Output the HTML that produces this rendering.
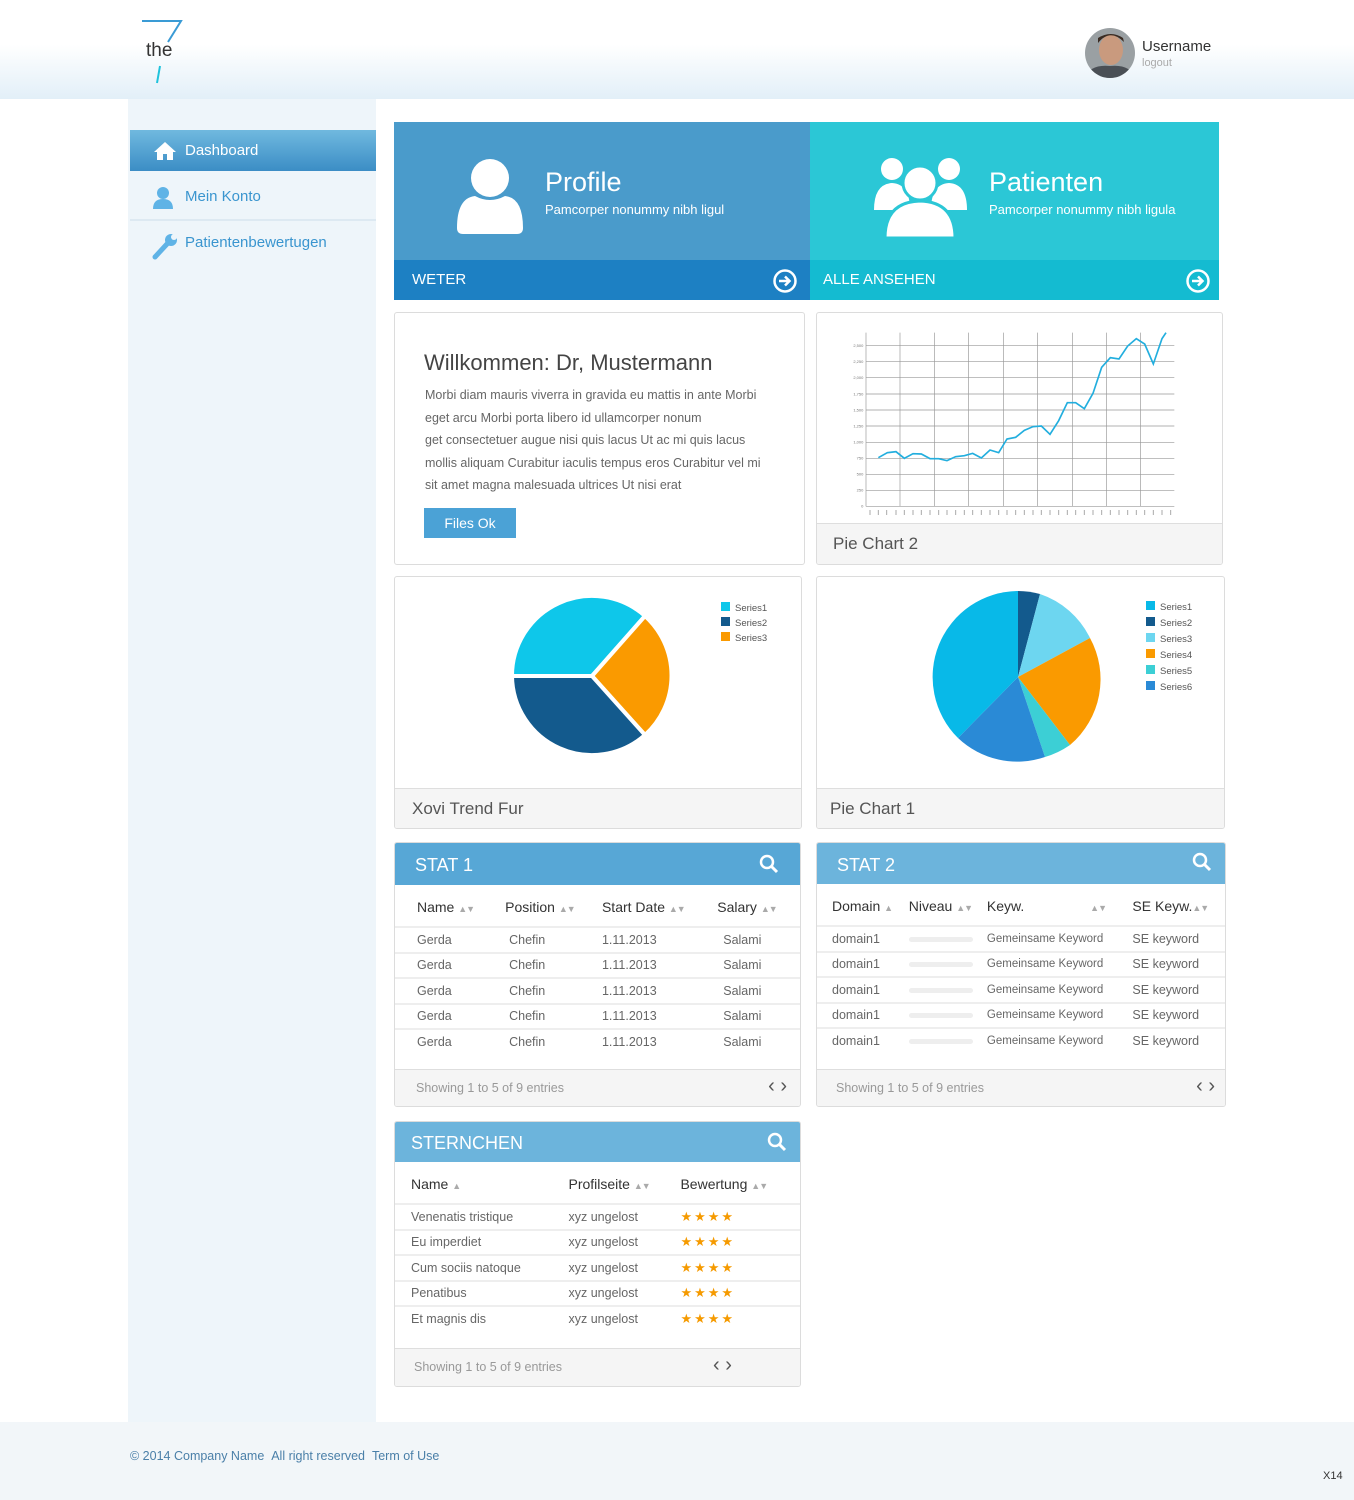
<!DOCTYPE html>
<html><head><meta charset="utf-8"><style>
*{margin:0;padding:0;box-sizing:border-box}
body{width:1354px;height:1500px;position:relative;background:#fff;font-family:"Liberation Sans",sans-serif;color:#555;overflow:hidden}
.a{position:absolute}
.hdr{left:0;top:0;width:1354px;height:99px;background:linear-gradient(#fff 0%,#fff 45%,#e2eff8 100%)}
.side{left:128px;top:99px;width:248px;height:1323px;background:#eef5fa}
.nav{left:130px;width:246px;height:42px;font-size:15px;color:#3a95cf;padding:12px 0 0 55px}
.card{border:1px solid #dcdcdc;border-radius:3px;background:#fff}
.foot{background:#f5f5f5;border-top:1px solid #dedede}
table{border-collapse:collapse;width:100%;font-size:12.5px;color:#666}
td{height:25.5px;border-bottom:2px solid #eee}
th{font-weight:normal;color:#333;font-size:14px;text-align:left;height:40px;border-bottom:2px solid #eee}
.srt{color:#aaa;font-size:9px;letter-spacing:-1px}
.sh{color:#fff;font-size:18px;padding:12px 0 0 20px}
.st{color:#f59a00;font-size:13px;letter-spacing:2px}
.bar{display:inline-block;width:64px;height:5px;background:#eee;border-radius:3px;vertical-align:middle}
</style></head><body>
<div class="a hdr"></div>
<svg class="a" style="left:138px;top:18px" width="50" height="68" viewBox="0 0 50 68"><path d="M4 3H43L30 24" stroke="#3a9bd5" stroke-width="2" fill="none"/><path d="M22 48L19 65" stroke="#1fc3dc" stroke-width="2"/></svg>
<div class="a" style="left:146px;top:40px;font-size:19px;color:#333">the</div>
<svg class="a" style="left:1085px;top:28px" width="50" height="50"><defs><clipPath id="c"><circle cx="25" cy="25" r="25"/></clipPath></defs><g clip-path="url(#c)"><rect width="50" height="50" fill="#9aa0a3"/><ellipse cx="26" cy="22" rx="12" ry="15" fill="#c99a7e"/><path d="M13 15Q25 0 39 14L38 10Q26 2 13 10Z" fill="#3a2b22"/><path d="M0 50Q5 36 25 38Q45 36 50 50Z" fill="#4a4f55"/></g></svg>
<div class="a" style="left:1142px;top:38px;font-size:15px;color:#333">Username</div>
<div class="a" style="left:1142px;top:57px;font-size:11px;color:#aaa">logout</div>
<div class="a side"></div>
<div class="a nav" style="top:130px;height:41px;background:linear-gradient(#70b9df,#3b8dc5);color:#fff">Dashboard</div>
<svg class="a" style="left:153px;top:141px" width="24" height="20"><path d="M12 1L1 11H4V19H10V13H14V19H20V11H23Z" fill="#fff"/></svg>
<div class="a nav" style="top:176px">Mein Konto</div>
<div class="a" style="left:130px;top:219px;width:246px;height:2px;background:#dde9f2"></div>
<svg class="a" style="left:152px;top:186px" width="24" height="24"><circle cx="11" cy="7" r="6" fill="#5fb3e6"/><path d="M1 23Q1 13 11 13Q21 13 21 23Z" fill="#5fb3e6"/></svg>
<div class="a nav" style="top:222px">Patientenbewertugen</div>
<svg class="a" style="left:152px;top:232px" width="26" height="28"><path d="M3 25L15 12" stroke="#5fb3e6" stroke-width="5" stroke-linecap="round"/><circle cx="19" cy="8" r="6" fill="#5fb3e6"/><circle cx="22" cy="5" r="3" fill="#eef5fa"/></svg>

<div class="a" style="left:394px;top:122px;width:416px;height:178px;background:#4a9bcb"></div>
<div class="a" style="left:394px;top:260px;width:416px;height:40px;background:#1d80c3;color:#fff;font-size:15px;padding:11px 18px">WETER</div>
<div class="a" style="left:810px;top:122px;width:409px;height:178px;background:#2bc7d6"></div>
<div class="a" style="left:810px;top:260px;width:409px;height:40px;background:#14bbd1;color:#fff;font-size:15px;padding:11px 13px">ALLE ANSEHEN</div>
<svg class="a" style="left:772px;top:268px" width="26" height="26"><circle cx="13" cy="13" r="10.5" stroke="#fff" stroke-width="2.5" fill="none"/><path d="M7 13H17M13 8.5L17.5 13L13 17.5" stroke="#fff" stroke-width="2.5" fill="none"/></svg>
<svg class="a" style="left:1185px;top:268px" width="26" height="26"><circle cx="13" cy="13" r="10.5" stroke="#fff" stroke-width="2.5" fill="none"/><path d="M7 13H17M13 8.5L17.5 13L13 17.5" stroke="#fff" stroke-width="2.5" fill="none"/></svg>
<svg class="a" style="left:455px;top:158px" width="70" height="76"><circle cx="35" cy="20" r="19" fill="#fff"/><path d="M2 70Q2 40 20 38Q35 46 50 38Q68 40 68 70Q68 76 62 76H8Q2 76 2 70Z" fill="#fff"/></svg>
<div class="a" style="left:545px;top:167px;font-size:27px;color:#fff">Profile</div>
<div class="a" style="left:545px;top:202px;font-size:13px;color:#fff">Pamcorper nonummy nibh ligul</div>
<svg class="a" style="left:873px;top:152px" width="95" height="88"><circle cx="19" cy="17" r="11" fill="#fff"/><circle cx="76" cy="17" r="11" fill="#fff"/><path d="M1 58Q1 32 19 31Q37 32 37 58Z" fill="#fff"/><path d="M58 58Q58 32 76 31Q94 32 94 58Z" fill="#fff"/><circle cx="47" cy="31" r="17" stroke="#2bc7d6" stroke-width="3" fill="#fff"/><path d="M12 86Q12 50 47 49Q82 50 82 86Z" stroke="#2bc7d6" stroke-width="3" fill="#fff"/></svg>
<div class="a" style="left:989px;top:167px;font-size:27px;color:#fff">Patienten</div>
<div class="a" style="left:989px;top:202px;font-size:13px;color:#fff">Pamcorper nonummy nibh ligula</div>

<div class="a card" style="left:394px;top:312px;width:411px;height:253px"></div>
<div class="a" style="left:424px;top:350px;font-size:22px;color:#444">Willkommen: Dr, Mustermann</div>
<div class="a" style="left:425px;top:384px;width:348px;font-size:12.5px;line-height:22.5px;color:#666">Morbi diam mauris viverra in gravida eu mattis in ante Morbi eget arcu Morbi porta libero id ullamcorper nonum<br>get consectetuer augue nisi quis lacus Ut ac mi quis lacus mollis aliquam Curabitur iaculis tempus eros Curabitur vel mi sit amet magna malesuada ultrices Ut nisi erat</div>
<div class="a" style="left:424px;top:508px;width:92px;height:30px;background:#4ba2d6;color:#fff;font-size:14px;text-align:center;line-height:30px">Files Ok</div>

<div class="a card" style="left:816px;top:312px;width:407px;height:253px;overflow:hidden"><div class="a foot" style="left:0;top:210px;width:407px;height:43px;font-size:17px;color:#555;padding:10px 16px">Pie Chart 2</div></div>
<svg class="a" style="left:810px;top:310px" width="420" height="212" viewBox="0 0 1260 636">
<g stroke="#999" stroke-width="2"><path d="M168 107H1093M168 155H1093M168 203H1093M168 252H1093M168 300H1093M168 348H1093M168 397H1093M168 445H1093M168 493H1093M168 541H1093M168 589H1093"/><path d="M168 68V589M270 68V589M373 68V589M476 68V589M580 68V589M683 68V589M787 68V589M889 68V589M992 68V589"/></g>
<g font-size="12" fill="#777" text-anchor="end" font-family="Liberation Sans"><text x="160" y="111">2,500</text><text x="160" y="159">2,250</text><text x="160" y="207">2,000</text><text x="160" y="256">1,750</text><text x="160" y="304">1,500</text><text x="160" y="352">1,250</text><text x="160" y="401">1,000</text><text x="160" y="449">750</text><text x="160" y="497">500</text><text x="160" y="545">250</text><text x="160" y="593">0</text></g>
<polyline fill="none" stroke="#22aede" stroke-width="5" points="205,443 232,428 258,425 283,445 309,431 334,432 360,446 386,446 411,452 437,440 463,437 488,430 514,444 540,420 566,428 591,387 617,382 643,361 669,350 694,348 720,373 746,332 772,278 797,278 823,296 849,250 875,172 901,143 927,147 953,108 979,86 1004,102 1030,162 1056,86 1068,68"/>
<path d="M180 600V615M205 600V615M230 600V615M258 600V615M283 600V615M309 600V615M334 600V615M360 600V615M386 600V615M411 600V615M437 600V615M463 600V615M488 600V615M514 600V615M540 600V615M566 600V615M591 600V615M617 600V615M643 600V615M669 600V615M694 600V615M720 600V615M746 600V615M772 600V615M797 600V615M823 600V615M849 600V615M875 600V615M901 600V615M927 600V615M953 600V615M979 600V615M1004 600V615M1030 600V615M1056 600V615M1082 600V615" stroke="#aaa" stroke-width="3"/>
</svg>

<div class="a card" style="left:394px;top:576px;width:408px;height:253px;overflow:hidden"><div class="a foot" style="left:0;top:211px;width:408px;height:42px;font-size:17px;padding:10px 17px">Xovi Trend Fur</div></div>
<svg class="a" style="left:500px;top:585px" width="190" height="185"><g stroke="#fff" stroke-width="4"><path d="M92 91L12 91A80 80 0 0 1 145 31Z" fill="#0ec7ea"/><path d="M92 91L145 31A80 80 0 0 1 145 150Z" fill="#fa9a00"/><path d="M92 91L145 150A80 80 0 0 1 12 91Z" fill="#135a8d"/></g></svg>
<div class="a" style="left:721px;top:601px;font-size:9.5px;line-height:15px;color:#555"><div><span style="display:inline-block;width:9px;height:9px;background:#0ec7ea;margin-right:5px"></span>Series1</div><div><span style="display:inline-block;width:9px;height:9px;background:#135a8d;margin-right:5px"></span>Series2</div><div><span style="display:inline-block;width:9px;height:9px;background:#fa9a00;margin-right:5px"></span>Series3</div></div>

<div class="a card" style="left:816px;top:576px;width:409px;height:253px;overflow:hidden"><div class="a foot" style="left:0;top:211px;width:409px;height:42px;font-size:17px;padding:10px 13px">Pie Chart 1</div></div>
<svg class="a" style="left:930px;top:589px" width="178" height="178"><g transform="translate(88,88)"><path d="M0 0L0 -86A86 86 0 0 1 22 -83Z" fill="#135a8d"/><path d="M0 0L22 -83A86 86 0 0 1 72 -39Z" fill="#6dd6f0"/><path d="M0 0L72 -39A86 86 0 0 1 52 68Z" fill="#fa9a00"/><path d="M0 0L52 68A86 86 0 0 1 27 80Z" fill="#3ccfd5"/><path d="M0 0L27 80A86 86 0 0 1 -60 61Z" fill="#2a8ad6"/><path d="M0 0L-60 61A86 86 0 0 1 0 -86Z" fill="#08b9e8"/></g></svg>
<div class="a" style="left:1146px;top:600px;font-size:9.5px;line-height:16px;color:#555"><div><span style="display:inline-block;width:9px;height:9px;background:#08b9e8;margin-right:5px"></span>Series1</div><div><span style="display:inline-block;width:9px;height:9px;background:#135a8d;margin-right:5px"></span>Series2</div><div><span style="display:inline-block;width:9px;height:9px;background:#6dd6f0;margin-right:5px"></span>Series3</div><div><span style="display:inline-block;width:9px;height:9px;background:#fa9a00;margin-right:5px"></span>Series4</div><div><span style="display:inline-block;width:9px;height:9px;background:#3ccfd5;margin-right:5px"></span>Series5</div><div><span style="display:inline-block;width:9px;height:9px;background:#2a8ad6;margin-right:5px"></span>Series6</div></div>

<div class="a card" style="left:394px;top:842px;width:407px;height:265px;overflow:hidden">
<div style="height:42px;background:#57a7d6" class="sh">STAT 1</div>
<table style="margin-top:2px"><tr><th style="padding-left:22px">Name <span class="srt">▲▼</span></th><th>Position <span class="srt">▲▼</span></th><th>Start Date <span class="srt">▲▼</span></th><th>Salary <span class="srt">▲▼</span></th></tr>
<tr><td style="padding-left:22px">Gerda</td><td style="padding-left:4px">Chefin</td><td>1.11.2013</td><td style="padding-left:6px">Salami</td></tr>
<tr><td style="padding-left:22px">Gerda</td><td style="padding-left:4px">Chefin</td><td>1.11.2013</td><td style="padding-left:6px">Salami</td></tr>
<tr><td style="padding-left:22px">Gerda</td><td style="padding-left:4px">Chefin</td><td>1.11.2013</td><td style="padding-left:6px">Salami</td></tr>
<tr><td style="padding-left:22px">Gerda</td><td style="padding-left:4px">Chefin</td><td>1.11.2013</td><td style="padding-left:6px">Salami</td></tr>
<tr><td style="padding-left:22px;border:0">Gerda</td><td style="padding-left:4px;border:0">Chefin</td><td style="border:0">1.11.2013</td><td style="padding-left:6px;border:0">Salami</td></tr></table>
<div class="a foot" style="left:0;top:226px;width:407px;height:39px;font-size:12.5px;color:#999;padding:11px 21px">Showing 1 to 5 of 9 entries<span style="position:absolute;right:15px;top:5px;font-size:20px;color:#555">‹ ›</span></div>
</div>
<svg class="a" style="left:759px;top:854px" width="20" height="20"><circle cx="8" cy="8" r="6" stroke="#fff" stroke-width="2.5" fill="none"/><path d="M12 12L18 18" stroke="#fff" stroke-width="3"/></svg>

<div class="a card" style="left:816px;top:842px;width:410px;height:265px;overflow:hidden">
<div style="height:41px;background:#6cb4dc" class="sh" >STAT 2</div>
<table style="margin-top:2px"><tr><th style="padding-left:15px">Domain <span class="srt">▲</span></th><th>Niveau <span class="srt">▲▼</span></th><th>Keyw. <span class="srt" style="padding-left:62px">▲▼</span></th><th>SE Keyw.<span class="srt">▲▼</span></th></tr>
<tr><td style="padding-left:15px">domain1</td><td><span class="bar"></span></td><td style="font-size:11.5px">Gemeinsame Keyword</td><td>SE keyword</td></tr>
<tr><td style="padding-left:15px">domain1</td><td><span class="bar"></span></td><td style="font-size:11.5px">Gemeinsame Keyword</td><td>SE keyword</td></tr>
<tr><td style="padding-left:15px">domain1</td><td><span class="bar"></span></td><td style="font-size:11.5px">Gemeinsame Keyword</td><td>SE keyword</td></tr>
<tr><td style="padding-left:15px">domain1</td><td><span class="bar"></span></td><td style="font-size:11.5px">Gemeinsame Keyword</td><td>SE keyword</td></tr>
<tr><td style="padding-left:15px;border:0">domain1</td><td style="border:0"><span class="bar"></span></td><td style="font-size:11.5px;border:0">Gemeinsame Keyword</td><td style="border:0">SE keyword</td></tr></table>
<div class="a foot" style="left:0;top:226px;width:410px;height:39px;font-size:12.5px;color:#999;padding:11px 19px">Showing 1 to 5 of 9 entries<span style="position:absolute;right:12px;top:5px;font-size:20px;color:#555">‹ ›</span></div>
</div>
<svg class="a" style="left:1192px;top:852px" width="20" height="20"><circle cx="8" cy="8" r="6" stroke="#fff" stroke-width="2.5" fill="none"/><path d="M12 12L18 18" stroke="#fff" stroke-width="3"/></svg>

<div class="a card" style="left:394px;top:1121px;width:407px;height:266px;overflow:hidden">
<div style="height:40px;background:#6cb4dc;padding:11px 0 0 16px" class="sh">STERNCHEN</div>
<table style="margin-top:2px"><tr><th style="padding-left:16px">Name <span class="srt">▲</span></th><th>Profilseite <span class="srt">▲▼</span></th><th>Bewertung <span class="srt">▲▼</span></th></tr>
<tr><td style="padding-left:16px">Venenatis tristique</td><td>xyz ungelost</td><td class="st">★★★★</td></tr>
<tr><td style="padding-left:16px">Eu imperdiet</td><td>xyz ungelost</td><td class="st">★★★★</td></tr>
<tr><td style="padding-left:16px">Cum sociis natoque</td><td>xyz ungelost</td><td class="st">★★★★</td></tr>
<tr><td style="padding-left:16px">Penatibus</td><td>xyz ungelost</td><td class="st">★★★★</td></tr>
<tr><td style="padding-left:16px;border:0">Et magnis dis</td><td style="border:0">xyz ungelost</td><td class="st" style="border:0">★★★★</td></tr></table>
<div class="a foot" style="left:0;top:226px;width:407px;height:40px;font-size:12.5px;color:#999;padding:11px 19px">Showing 1 to 5 of 9 entries<span style="position:absolute;left:318px;top:5px;font-size:20px;color:#555">‹ ›</span></div>
</div>
<svg class="a" style="left:767px;top:1132px" width="20" height="20"><circle cx="8" cy="8" r="6" stroke="#fff" stroke-width="2.5" fill="none"/><path d="M12 12L18 18" stroke="#fff" stroke-width="3"/></svg>

<div class="a" style="left:0;top:1422px;width:1354px;height:78px;background:#f2f6f9"></div>
<div class="a" style="left:130px;top:1449px;font-size:12.5px;color:#4a7fa8">© 2014 Company Name &nbsp;All right reserved &nbsp;Term of Use</div>
<div class="a" style="left:1323px;top:1470px;font-size:11px;color:#333">X14</div>
</body></html>
